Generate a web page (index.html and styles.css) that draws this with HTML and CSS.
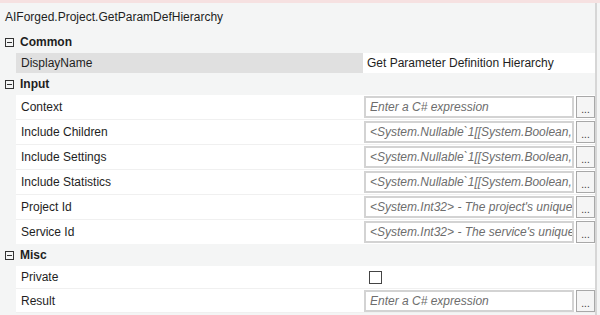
FILE: index.html
```html
<!DOCTYPE html>
<html lang="en">
<head>
    <meta charset="UTF-8">
    <meta name="viewport" content="width=device-width, initial-scale=1.0">
    <title>Properties</title>
    <link rel="stylesheet" href="styles.css">
</head>
<body>
    <div class="topline"></div>
    <div class="panel">
        <div class="title">AIForged.Project.GetParamDefHierarchy</div>

        <div class="category"><span class="toggle"></span>Common</div>
        <div class="prop selected">
            <div class="name">DisplayName</div>
            <div class="value plain">Get Parameter Definition Hierarchy</div>
        </div>

        <div class="category"><span class="toggle"></span>Input</div>
        <div class="prop">
            <div class="name">Context</div>
            <div class="value"><div class="box">Enter a C# expression</div><button class="more">...</button></div>
        </div>
        <div class="prop">
            <div class="name">Include Children</div>
            <div class="value"><div class="box">&lt;System.Nullable`1[[System.Boolean, mscorlib]]&gt;</div><button class="more">...</button></div>
        </div>
        <div class="prop">
            <div class="name">Include Settings</div>
            <div class="value"><div class="box">&lt;System.Nullable`1[[System.Boolean, mscorlib]]&gt;</div><button class="more">...</button></div>
        </div>
        <div class="prop">
            <div class="name">Include Statistics</div>
            <div class="value"><div class="box">&lt;System.Nullable`1[[System.Boolean, mscorlib]]&gt;</div><button class="more">...</button></div>
        </div>
        <div class="prop">
            <div class="name">Project Id</div>
            <div class="value"><div class="box">&lt;System.Int32&gt; - The project's unique identifier</div><button class="more">...</button></div>
        </div>
        <div class="prop last">
            <div class="name">Service Id</div>
            <div class="value"><div class="box">&lt;System.Int32&gt; - The service's unique identifier</div><button class="more">...</button></div>
        </div>

        <div class="category"><span class="toggle"></span>Misc</div>
        <div class="prop check">
            <div class="name">Private</div>
            <div class="value"><span class="checkbox"></span></div>
        </div>
        <div class="prop result">
            <div class="name">Result</div>
            <div class="value"><div class="box">Enter a C# expression</div><button class="more">...</button></div>
        </div>
    </div>
</body>
</html>
```

FILE: styles.css
```css
body {
    margin: 0;
    background-color: #f4f5f5;
    font-family: "Liberation Sans", Arial, sans-serif;
    font-size: 12px;
    color: #1e1e1e;
}
.topline {
    height: 3px;
    background-color: #f6e1e1;
}
.panel {
    width: 595px;
    height: 312px;
    border-right: 2px solid #d6d6d6;
}
.title {
    height: 28px;
    line-height: 28px;
    padding-left: 5px;
}
.category {
    height: 22px;
    display: flex;
    align-items: center;
    font-weight: bold;
}
.toggle {
    position: relative;
    width: 7px;
    height: 7px;
    border: 1px solid #333;
    margin: 0 6px 0 5px;
}
.toggle::after {
    content: "";
    position: absolute;
    left: 1px;
    top: 3px;
    width: 5px;
    height: 1px;
    background-color: #333;
}
.prop {
    display: flex;
    height: 24px;
    margin-left: 16px;
    background-color: #fff;
    border-bottom: 1px solid #f0f0f0;
}
.prop.last {
    border-bottom: none;
}
.prop.selected {
    height: 20px;
    border-bottom: none;
}
.prop.check {
    height: 22px;
}
.prop.result {
    height: 23px;
}
.name {
    width: 342px;
    padding-left: 5px;
    display: flex;
    align-items: center;
}
.selected .name {
    background-color: #e0e0e0;
}
.value {
    flex: 1;
    display: flex;
    align-items: center;
    padding-left: 1px;
}
.value.plain {
    padding-left: 4px;
}
.box {
    box-sizing: border-box;
    width: 210px;
    height: 22px;
    line-height: 18px;
    padding-left: 4px;
    border: 2px solid #d3d3d3;
    background-color: #fff;
    color: #6d6d6d;
    font-style: italic;
    white-space: nowrap;
    overflow: hidden;
}
.more {
    box-sizing: border-box;
    width: 19px;
    height: 22px;
    margin-left: 2px;
    padding: 6px 0 0;
    border: 1px solid #a8a8a8;
    background-color: #f5f5f5;
    font-family: "Liberation Sans", Arial, sans-serif;
    font-size: 10px;
    line-height: 10px;
    color: #333;
}
.checkbox {
    width: 11px;
    height: 11px;
    margin-left: 5px;
    border: 1px solid #444;
    background-color: #fff;
}
```
